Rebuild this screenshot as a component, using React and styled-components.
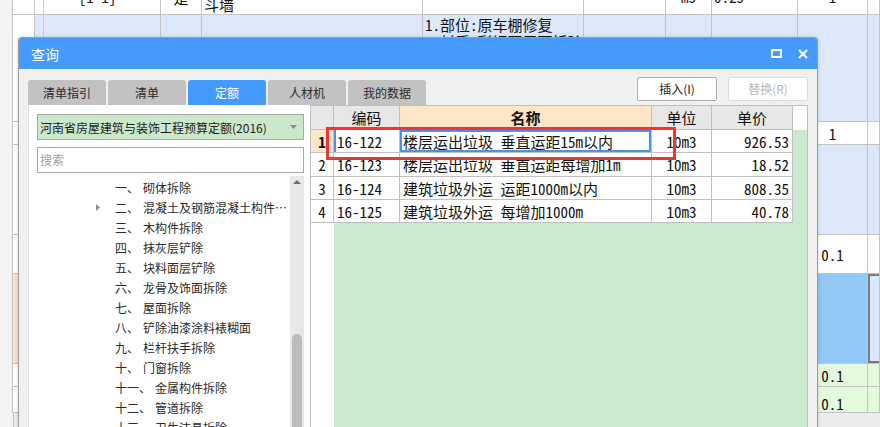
import React from 'react';
import styled, { createGlobalStyle } from 'styled-components';

const ui = `"Noto Sans CJK SC", "Noto Sans", sans-serif`;
const mono = `"Noto Sans Mono CJK SC", "Noto Sans CJK SC", monospace`;

const GlobalStyle = createGlobalStyle`
  html, body {
    margin: 0;
    padding: 0;
  }
  body {
    width: 880px;
    height: 427px;
    overflow: hidden;
    font-family: ${ui};
    background: #fff;
  }
`;

const tones = {
  white: '#ffffff',
  blue: '#dde9fb',
  green: '#e3fbdc',
  orange: '#fde4c6',
  pick: '#92c8f6',
  strip: '#f3f3f3',
};

const Page = styled.div`
  position: relative;
  width: 880px;
  height: 427px;
  overflow: hidden;
`;

/* ---------- background sheet ---------- */

const Sheet = styled.div`
  display: flex;
  flex-direction: column;
  height: 427px;
`;

const SheetRow = styled.div`
  display: grid;
  grid-template-columns: 13px 22px 126px 41px 221px 161px 82px 46px 86px 70px 12px;
  height: ${p => p.$h}px;
  flex: none;
`;

const Cell = styled.div`
  box-sizing: border-box;
  border-right: 1px solid #c4c4c4;
  border-bottom: ${p => (p.$strip ? 'none' : '1px solid #c4c4c4')};
  background-color: ${p => tones[p.$tone]};
  background-image: ${p =>
    p.$marker
      ? 'linear-gradient(to right, transparent 8px, #f6c27c 8px, #f6c27c 9px, transparent 9px)'
      : 'none'};
  box-shadow: ${p => (p.$focus ? 'inset 2px 2px 0 #7a7a7a, inset 0 -2px 0 #7a7a7a' : 'none')};
  overflow: hidden;
  display: flex;
  flex-direction: column;
  justify-content: ${p => (p.$top ? 'flex-start' : p.$low ? 'flex-end' : 'center')};
  align-items: ${p => (p.$center ? 'center' : 'flex-start')};
  padding: ${p => (p.$top ? '1px 2px' : '0 2px')};
  font-family: ${mono};
  font-size: 15px;
  line-height: 17px;
  color: #111;
  white-space: nowrap;
`;

const Lifted = styled.span`
  margin-top: ${p => p.$by}px;
`;

const HScroll = styled.div`
  display: flex;
  flex: 1;
  & > div:first-child {
    width: 13px;
    border-right: 1px solid #c4c4c4;
    background: ${tones.strip};
  }
  & > div:last-child {
    flex: 1;
    background: #ececec;
  }
`;

// the first row is scrolled up, so only the lower edge of its texts shows
const sheetRows = [
  {
    h: 15,
    tone: 'white',
    lift: { 2: -13, 3: -12, 4: -5, 7: -13, 8: -13, 9: -13 },
    texts: { 2: '[1-1]', 3: '是', 4: '斗墙', 7: 'm3', 8: '0.25', 9: '1' },
  },
  { h: 107, tone: 'blue', top: true, texts: { 5: ['1.部位:原车棚修复', '2.材质:彩钢瓦屋面拆除'] } },
  { h: 23, tone: 'white', texts: { 9: '1' } },
  { h: 90, tone: 'blue', texts: {} },
  { h: 39, tone: 'white', texts: { 9: '0.1' } },
  { h: 90, tone: 'blue', selected: true, texts: {} },
  { h: 23, tone: 'green', texts: { 9: '0.1' } },
  { h: 26, tone: 'green', low: true, texts: { 9: '0.1' } },
];

function SheetLine({ row }) {
  const cells = [];
  for (let i = 0; i < 11; i++) {
    let tone = row.tone;
    if (i === 0) tone = 'strip';
    if (i === 1) tone = row.selected ? 'orange' : 'white';
    if (row.selected && i === 9) tone = 'pick';
    const text = row.texts[i];
    const center = i === 2 || i === 3 || i === 7 || i === 9;
    let content = null;
    if (Array.isArray(text)) content = text.map(t => <span key={t}>{t}</span>);
    else if (text && row.lift) content = <Lifted $by={row.lift[i]}>{text}</Lifted>;
    else if (text) content = text;
    cells.push(
      <Cell
        key={i}
        $tone={tone}
        $strip={i === 0}
        $marker={i === 2}
        $focus={row.selected && i === 10}
        $center={center}
        $top={row.top || !!row.lift}
        $low={row.low}
      >
        {content}
      </Cell>
    );
  }
  return <SheetRow $h={row.h}>{cells}</SheetRow>;
}

/* ---------- dialog ---------- */

const Dialog = styled.div`
  position: absolute;
  left: 18px;
  top: 37px;
  width: 800px;
  height: 400px;
  box-sizing: border-box;
  border: 1px solid #9c9c9c;
  border-bottom: none;
  border-radius: 4px 4px 0 0;
  overflow: hidden;
  background: #f0f0f0;
  display: flex;
  flex-direction: column;
  box-shadow: 0 0 4px rgba(0, 0, 0, 0.15);
`;

const TitleBar = styled.div`
  height: 31px;
  flex: none;
  background: #459afd;
  display: flex;
  align-items: center;
  justify-content: space-between;
  padding: 0 9px 0 12px;
  color: #fff;
  font-size: 14px;
  line-height: 16px;
`;

const TitleTools = styled.div`
  display: flex;
  align-items: center;
  gap: 16px;
  svg {
    display: block;
  }
`;

const TopBar = styled.div`
  height: 36px;
  flex: none;
  box-sizing: border-box;
  padding: 8px 9px 0 9px;
  display: flex;
  align-items: flex-end;
  justify-content: space-between;
`;

const Tabs = styled.div`
  display: flex;
  gap: 2px;
`;

const Tab = styled.div`
  width: 78px;
  height: 25px;
  border-radius: 3px 3px 0 0;
  background: ${p => (p.$active ? '#459afd' : '#c2c2c2')};
  color: ${p => (p.$active ? '#fff' : '#2a2a2a')};
  font-size: 12px;
  line-height: 25px;
  text-align: center;
`;

const Buttons = styled.div`
  display: flex;
  gap: 11px;
  align-self: flex-start;
`;

const Button = styled.div`
  width: 80px;
  height: 24px;
  box-sizing: border-box;
  border: 1px solid ${p => (p.$disabled ? '#dcdcdc' : '#acacac')};
  border-radius: 2px;
  background: #fff;
  color: ${p => (p.$disabled ? '#b8b8b8' : '#1e1e1e')};
  font-size: 12px;
  line-height: 22px;
  text-align: center;
`;

const Panes = styled.div`
  flex: 1;
  display: flex;
  padding: 0 9px 0 9px;
  min-height: 0;
`;

const LeftPane = styled.div`
  width: 282px;
  flex: none;
  box-sizing: border-box;
  background: #fff;
  border-left: 1px solid #dedede;
  padding: 9px 6px 0 8px;
  display: flex;
  flex-direction: column;
`;

const Combo = styled.div`
  height: 26px;
  box-sizing: border-box;
  border: 1px solid #a9a9a9;
  background: #cbe8cb;
  display: flex;
  align-items: center;
  justify-content: space-between;
  padding: 0 6px 0 2px;
  font-size: 12px;
  color: #1c1c1c;
  white-space: nowrap;
`;

const Search = styled.div`
  margin-top: 7px;
  height: 26px;
  box-sizing: border-box;
  border: 1px solid #a9a9a9;
  background: #fff;
  padding: 0 2px;
  font-size: 12px;
  line-height: 24px;
  color: #a0a0a0;
`;

const TreeWrap = styled.div`
  margin-top: 3px;
  flex: 1;
  display: flex;
  min-height: 0;
`;

const TreeList = styled.div`
  flex: 1;
  min-width: 0;
  padding-top: 1px;
`;

const TreeRow = styled.div`
  height: 20px;
  display: flex;
  align-items: center;
  padding-left: 59px;
  padding-right: 2px;
  font-size: 12px;
  color: #2b2b2b;
  white-space: nowrap;
`;

const Twisty = styled.span`
  width: 19px;
  flex: none;
  display: flex;
  align-items: center;
`;

const Num = styled.span`
  flex: none;
  margin-right: 4px;
`;

const Label = styled.span`
  overflow: hidden;
  text-overflow: ellipsis;
  min-width: 0;
`;

const VScroll = styled.div`
  width: 14px;
  flex: none;
  background: #e8e8e8;
  display: flex;
  flex-direction: column;
  align-items: center;
  svg {
    display: block;
    margin-top: 4px;
  }
`;

const Thumb = styled.div`
  margin-top: 150px;
  width: 10px;
  flex: 1;
  border-radius: 5px 5px 0 0;
  background: #bcbcbc;
`;

/* ---------- result grid ---------- */

const GridPane = styled.div`
  position: relative;
  flex: 1;
  box-sizing: border-box;
  border: 1px solid #c0c0c0;
  border-bottom: none;
  background: #cbe9cf;
  display: flex;
  flex-direction: column;
  font-family: ${mono};
  font-size: 15px;
  color: #111;
`;

const colWidths = [23, 66, 252, 60, 81];

const GridRow = styled.div`
  display: flex;
  height: ${p => p.$h}px;
  flex: none;
`;

const GCell = styled.div`
  width: ${p => colWidths[p.$col]}px;
  flex: none;
  box-sizing: border-box;
  border-right: 1px solid #c0c0c0;
  border-bottom: 1px solid #c0c0c0;
  background: ${p => p.$bg || '#fff'};
  box-shadow: ${p =>
    p.$focus ? 'inset 0 0 0 2px #4592f0' : p.$mark ? 'inset 2px 0 0 #4592f0' : 'none'};
  display: flex;
  align-items: center;
  justify-content: ${p => p.$align || 'flex-start'};
  padding: 0 3px;
  line-height: 17px;
  font-weight: ${p => (p.$bold ? 700 : 400)};
  white-space: nowrap;
  overflow: hidden;
`;

const HeadFill = styled.div`
  flex: 1;
  background: #fff;
`;

const Rest = styled.div`
  flex: 1;
  display: flex;
  & > div {
    width: 23px;
    background: #fff;
  }
`;

const RedBox = styled.div`
  position: absolute;
  left: 15px;
  top: 21px;
  width: 350px;
  height: 33px;
  box-sizing: border-box;
  border: 3px solid #ef3434;
  pointer-events: none;
`;

const items = [
  { n: '1', code: '16-122', name: '楼层运出垃圾 垂直运距15m以内', unit: '10m3', price: '926.53', h: 23 },
  { n: '2', code: '16-123', name: '楼层运出垃圾 垂直运距每增加1m', unit: '10m3', price: '18.52', h: 24 },
  { n: '3', code: '16-124', name: '建筑垃圾外运 运距1000m以内', unit: '10m3', price: '808.35', h: 23 },
  { n: '4', code: '16-125', name: '建筑垃圾外运 每增加1000m', unit: '10m3', price: '40.78', h: 23 },
];

const tree = [
  ['一、', '砌体拆除'],
  ['二、', '混凝土及钢筋混凝土构件拆除', true],
  ['三、', '木构件拆除'],
  ['四、', '抹灰层铲除'],
  ['五、', '块料面层铲除'],
  ['六、', '龙骨及饰面拆除'],
  ['七、', '屋面拆除'],
  ['八、', '铲除油漆涂料裱糊面'],
  ['九、', '栏杆扶手拆除'],
  ['十、', '门窗拆除'],
  ['十一、', '金属构件拆除'],
  ['十二、', '管道拆除'],
  ['十三、', '卫生洁具拆除'],
];

const tabs = ['清单指引', '清单', '定额', '人材机', '我的数据'];

export default function App() {
  return (
    <Page>
      <GlobalStyle />
      <Sheet>
        {sheetRows.map((row, i) => (
          <SheetLine key={i} row={row} />
        ))}
        <HScroll>
          <div />
          <div />
        </HScroll>
      </Sheet>

      <Dialog>
        <TitleBar>
          <span>查询</span>
          <TitleTools>
            <svg width="11" height="9" viewBox="0 0 11 9">
              <rect x="1" y="1" width="9" height="7" fill="none" stroke="#fff" strokeWidth="2" />
            </svg>
            <svg width="10" height="10" viewBox="0 0 10 10">
              <path d="M1 1 L9 9 M9 1 L1 9" stroke="#fff" strokeWidth="2" />
            </svg>
          </TitleTools>
        </TitleBar>

        <TopBar>
          <Tabs>
            {tabs.map(t => (
              <Tab key={t} $active={t === '定额'}>
                {t}
              </Tab>
            ))}
          </Tabs>
          <Buttons>
            <Button>插入(I)</Button>
            <Button $disabled>替换(R)</Button>
          </Buttons>
        </TopBar>

        <Panes>
          <LeftPane>
            <Combo>
              <span>河南省房屋建筑与装饰工程预算定额(2016)</span>
              <svg width="7" height="4" viewBox="0 0 7 4">
                <path d="M0 0 L7 0 L3.5 4 Z" fill="#8a8a8a" />
              </svg>
            </Combo>
            <Search>搜索</Search>
            <TreeWrap>
              <TreeList>
                {tree.map(([num, label, expandable]) => (
                  <TreeRow key={num}>
                    <Twisty>
                      {expandable && (
                        <svg width="4" height="7" viewBox="0 0 4 7">
                          <path d="M0 0 L4 3.5 L0 7 Z" fill="#8c8c8c" />
                        </svg>
                      )}
                    </Twisty>
                    <Num>{num}</Num>
                    <Label>{label}</Label>
                  </TreeRow>
                ))}
              </TreeList>
              <VScroll>
                <svg width="8" height="4" viewBox="0 0 8 4">
                  <path d="M0 4 L4 0 L8 4 Z" fill="#6f6f6f" />
                </svg>
                <Thumb />
              </VScroll>
            </TreeWrap>
          </LeftPane>

          <GridPane>
            <GridRow $h={24}>
              <GCell $col={0} $bg="#e7e7e7" />
              <GCell $col={1} $bg="#e7e7e7" $align="center">编码</GCell>
              <GCell $col={2} $bg="#fde5c8" $align="center" $bold>名称</GCell>
              <GCell $col={3} $bg="#e7e7e7" $align="center">单位</GCell>
              <GCell $col={4} $bg="#e7e7e7" $align="center">单价</GCell>
              <HeadFill />
            </GridRow>
            {items.map((it, i) => (
              <GridRow key={it.code} $h={it.h}>
                <GCell $col={0} $align="center" $bg={i === 0 ? '#fde5c8' : '#fff'} $bold={i === 0}>
                  {it.n}
                </GCell>
                <GCell $col={1} $mark={i === 0}>{it.code}</GCell>
                <GCell $col={2} $focus={i === 0}>{it.name}</GCell>
                <GCell $col={3} $align="center">{it.unit}</GCell>
                <GCell $col={4} $align="flex-end">{it.price}</GCell>
              </GridRow>
            ))}
            <Rest>
              <div />
            </Rest>
            <RedBox />
          </GridPane>
        </Panes>
      </Dialog>
    </Page>
  );
}
